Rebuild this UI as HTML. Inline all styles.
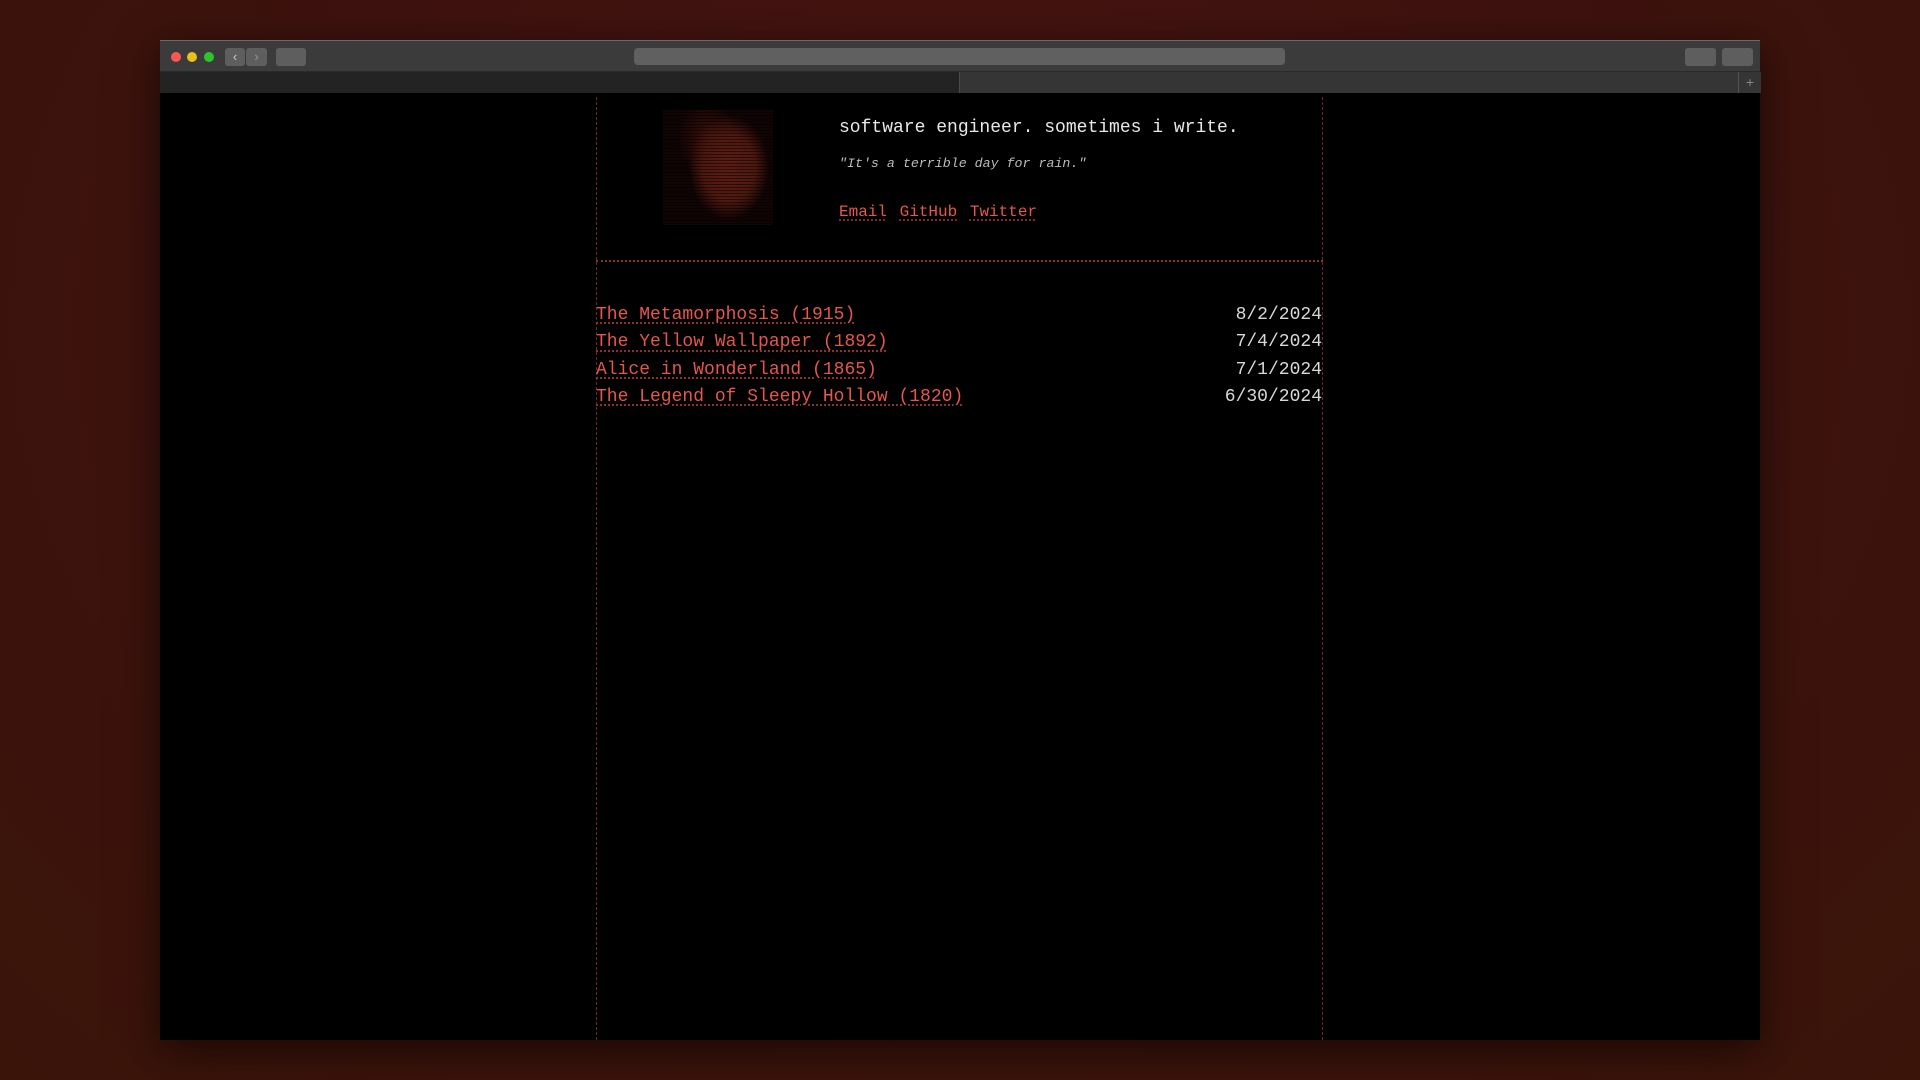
<!DOCTYPE html>
<html><head><meta charset="utf-8"><style>
html,body{margin:0;padding:0;width:1920px;height:1080px;overflow:hidden}
body{background:radial-gradient(ellipse at 50% 30%,#4a1512 0%,#3e120f 50%,#3a1409 100%);position:relative;font-family:"Liberation Mono",monospace}
.win{position:absolute;left:160px;top:40px;width:1600px;height:1000px;background:#000;box-shadow:0 10px 40px rgba(0,0,0,.6)}
.tb{position:absolute;left:0;top:0;width:1600px;height:32px;background:#3b3b3b;border-top:1px solid #6a6a6a;box-sizing:border-box;border-bottom:1px solid #2a2a2a}
.tabs{position:absolute;left:0;top:32px;width:1600px;height:21px;background:#232323}
.tabs .r{position:absolute;left:799px;top:0;width:779px;height:21px;background:#353535;border-left:1px solid #4a4a4a}
.tabs .p{position:absolute;left:1578px;top:0;width:22px;height:21px;background:#353535;border-left:1px solid #555;color:#888;font:14px "Liberation Sans",sans-serif;text-align:center;line-height:21px}
.dot{position:absolute;top:11px;width:10px;height:10px;border-radius:50%}
.btn{position:absolute;top:7px;height:18px;background:#5e5e5e;border-radius:3px}
.content{position:absolute;left:0;top:53px;width:1600px;height:947px}
.vl{position:absolute;top:4px;bottom:0;width:0;border-left:1px dashed #6e2a26}
.hl{position:absolute;left:436px;width:727px;top:167px;border-top:2px dotted #8a2f29}
a{color:#e3584a;text-decoration:underline dotted #9a3a32;text-underline-offset:4px}
.title{position:absolute;left:679px;top:25px;color:#e8e8e8;font-size:18px;white-space:nowrap}
.quote{position:absolute;left:679px;top:63px;color:#bbb;font-size:13.3px;font-style:italic;white-space:nowrap}
.links{position:absolute;left:679px;top:110px;font-size:16px;white-space:nowrap}
.links a{margin-right:3px}
.list{position:absolute;left:436px;top:209px;width:726px;font-size:18px;line-height:27.3px}
.row{display:flex;justify-content:space-between}
.row span{color:#d8d8d8}
.av{position:absolute;left:503px;top:17px;width:110px;height:115px;background:
radial-gradient(ellipse 40px 52px at 60% 50%,#5a1c12 0%,#4e180f 65%,rgba(40,10,8,0) 100%),
radial-gradient(ellipse 30px 40px at 40% 25%,#3a100c 0%,rgba(0,0,0,0) 100%),#100404;overflow:hidden}
.av:after{content:"";position:absolute;inset:0;background:repeating-linear-gradient(#0000 0 2px,rgba(0,0,0,.5) 2px 3px)}
</style></head><body>
<div class="win">
<div class="tb">
<div class="dot" style="left:11px;background:#fc5753"></div>
<div class="dot" style="left:27px;background:#e8c01b"></div>
<div class="dot" style="left:44px;background:#2dc42c"></div>
<div class="btn" style="left:65px;width:20px;color:#ccc;font:13px 'Liberation Sans';text-align:center;line-height:18px">&#8249;</div>
<div class="btn" style="left:86px;width:21px;color:#999;font:13px 'Liberation Sans';text-align:center;line-height:18px">&#8250;</div>
<div class="btn" style="left:116px;width:30px"></div>
<div class="btn" style="left:474px;width:651px;height:17px;background:#606060;border-radius:4px"></div>
<div class="btn" style="left:1525px;width:31px"></div>
<div class="btn" style="left:1562px;width:31px"></div>
</div>
<div class="tabs"><div class="r"></div><div class="p">+</div></div>
<div class="content">
<div class="vl" style="left:436px"></div>
<div class="vl" style="left:1162px"></div>
<div class="hl"></div>
<div class="av"></div>
<div class="title">software engineer. sometimes i write.</div>
<div class="quote">"It's a terrible day for rain."</div>
<div class="links"><a>Email</a> <a>GitHub</a> <a>Twitter</a></div>
<div class="list">
<div class="row"><a>The Metamorphosis (1915)</a><span>8/2/2024</span></div>
<div class="row"><a>The Yellow Wallpaper (1892)</a><span>7/4/2024</span></div>
<div class="row"><a>Alice in Wonderland (1865)</a><span>7/1/2024</span></div>
<div class="row"><a>The Legend of Sleepy Hollow (1820)</a><span>6/30/2024</span></div>
</div>
</div>
</div>
</body></html>
